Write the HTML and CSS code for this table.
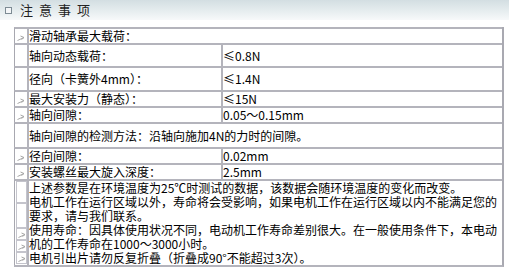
FILE: index.html
```html
<!DOCTYPE html>
<html>
<head>
<meta charset="utf-8">
<link rel="stylesheet" href="styles.css">
</head>
<body>
<div class="hdr"><span class="sq"></span><span class="ttl">注意事项</span></div>
<div class="grid">
  <div class="c ic"><svg class="ar" viewBox="0 0 8 6" width="8" height="6"><path d="M0.5 5.5 L7 2.5 M3.5 1 L7 2.5 L4.5 4.5"/></svg></div>
  <div class="c span2">滑动轴承最大载荷：</div>

  <div class="c ic"></div>
  <div class="c">轴向动态载荷：</div>
  <div class="c val">≤0.8N</div>

  <div class="c ic"></div>
  <div class="c">径向（卡簧外4mm）：</div>
  <div class="c val">≤1.4N</div>

  <div class="c ic"><svg class="ar" viewBox="0 0 8 6" width="8" height="6"><path d="M0.5 5.5 L7 2.5 M3.5 1 L7 2.5 L4.5 4.5"/></svg></div>
  <div class="c">最大安装力（静态）：</div>
  <div class="c val">≤15N</div>

  <div class="c ic"><svg class="ar" viewBox="0 0 8 6" width="8" height="6"><path d="M0.5 5.5 L7 2.5 M3.5 1 L7 2.5 L4.5 4.5"/></svg></div>
  <div class="c">轴向间隙：</div>
  <div class="c val">0.05～0.15mm</div>

  <div class="c ic"></div>
  <div class="c span2">轴向间隙的检测方法：沿轴向施加4N的力时的间隙。</div>

  <div class="c ic"><svg class="ar" viewBox="0 0 8 6" width="8" height="6"><path d="M0.5 5.5 L7 2.5 M3.5 1 L7 2.5 L4.5 4.5"/></svg></div>
  <div class="c">径向间隙：</div>
  <div class="c val">0.02mm</div>

  <div class="c ic"><svg class="ar" viewBox="0 0 8 6" width="8" height="6"><path d="M0.5 5.5 L7 2.5 M3.5 1 L7 2.5 L4.5 4.5"/></svg></div>
  <div class="c">安装螺丝最大旋入深度：</div>
  <div class="c val">2.5mm</div>

  <div class="c stack">
    <div class="bx b1"></div>
    <div class="bx b2"></div>
    <div class="bx b3"><svg class="ar" viewBox="0 0 8 6" width="8" height="6"><path d="M0.5 5.5 L7 2.5 M3.5 1 L7 2.5 L4.5 4.5"/></svg></div>
    <div class="bx b3"><svg class="ar" viewBox="0 0 8 6" width="8" height="6"><path d="M0.5 5.5 L7 2.5 M3.5 1 L7 2.5 L4.5 4.5"/></svg></div>
    <div class="bx b3"><svg class="ar" viewBox="0 0 8 6" width="8" height="6"><path d="M0.5 5.5 L7 2.5 M3.5 1 L7 2.5 L4.5 4.5"/></svg></div>
  </div>
  <div class="c span2 notes">上述参数是在环境温度为25℃时测试的数据，该数据会随环境温度的变化而改变。<br>电机工作在运行区域以外，寿命将会受影响，如果电机工作在运行区域以内不能满足您的<br>要求，请与我们联系。<br>使用寿命：因具体使用状况不同，电动机工作寿命差别很大。在一般使用条件下，本电动<br>机的工作寿命在1000～3000小时。<br>电机引出片请勿反复折叠（折叠成90°不能超过3次）。</div>
</div>
</body>
</html>
```

FILE: styles.css
```css
html, body {
  margin: 0;
  padding: 0;
  background: #ffffff;
}
body {
  width: 509px;
  height: 271px;
  overflow: hidden;
  font-family: "Noto Sans CJK SC", "Noto Sans", sans-serif;
  font-size: 12px;
  color: #000;
}
.hdr {
  height: 20px;
  display: flex;
  align-items: center;
  background: linear-gradient(to bottom, #d3dee2 0%, #e6edef 55%, #f7f9fa 100%);
}
.sq {
  width: 5px;
  height: 5px;
  margin-left: 5px;
  border: 1px solid #7d8b94;
  background: #f4f6f8;
}
.ttl {
  margin-left: 8px;
  font-size: 13px;
  letter-spacing: 6px;
  color: #222;
  line-height: 20px;
}
.grid {
  margin: 7px 0 0 14px;
  display: grid;
  grid-template-columns: 13px 194px 281px;
  grid-template-rows: 16px 23px 24px 16px 16px 25px 16px 16px 86px;
  border-right: 2px solid #a9a9b1;
  border-bottom: 2px solid #b4b4bc;
  width: max-content;
}
.c {
  box-sizing: border-box;
  border-top: 2px solid #b4b4bc;
  border-left: 2px solid #b4b4bc;
  display: flex;
  align-items: center;
  padding-left: 0;
  line-height: 14px;
  white-space: nowrap;
}
.ic {
  border-left: 1px solid #a8a8b0;
  justify-content: center;
  padding-top: 3px;
}
.span2 {
  grid-column: span 2;
}
.val {
  padding-left: 0;
}
.ar {
  display: block;
  fill: none;
  stroke: #a6a6a6;
  stroke-width: 1;
}
.stack {
  border-left: 1px solid #a8a8b0;
  flex-direction: column;
  align-items: stretch;
  padding-top: 0;
}
.bx {
  box-sizing: border-box;
  border: 1px solid #c4c4cc;
  display: flex;
  align-items: center;
  justify-content: center;
  margin-left: 1px;
}
.b1 { height: 22px; }
.b2 { height: 25px; }
.b3 { height: 12px; padding-top: 2px; }
.notes {
  display: block;
  padding-top: 0;
  line-height: 14px;
}
```
